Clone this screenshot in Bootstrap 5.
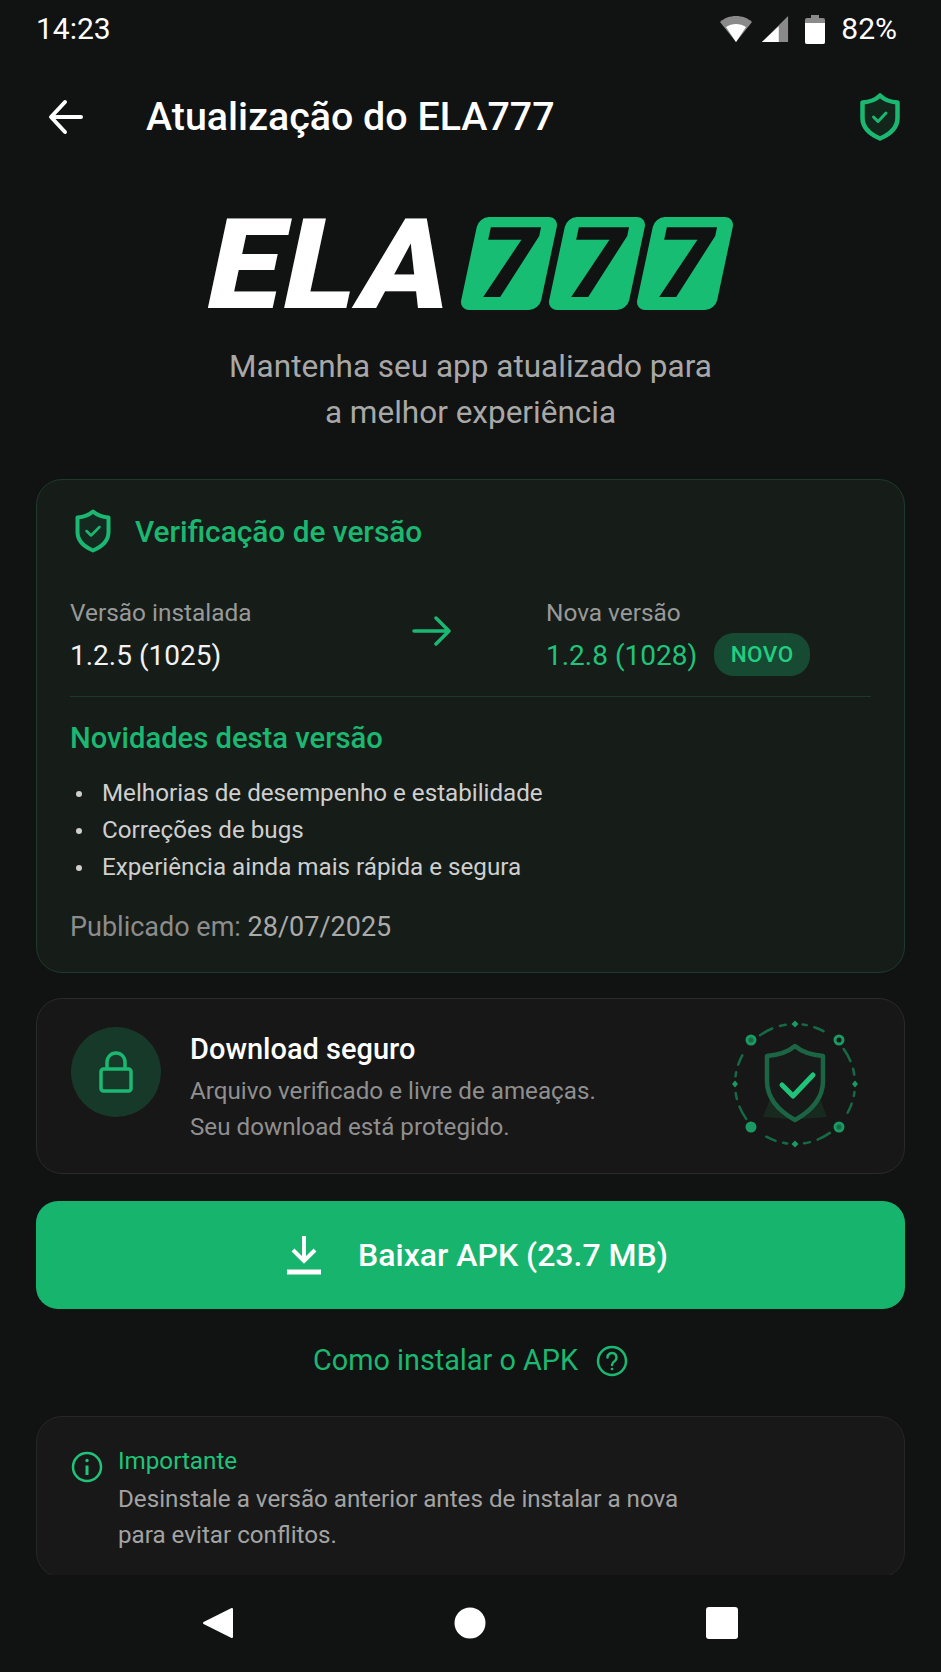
<!DOCTYPE html>
<html lang="pt-BR">
<head>
<meta charset="utf-8">
<title>Atualização do ELA777</title>
<link href="https://cdn.jsdelivr.net/npm/bootstrap@5.3.0/dist/css/bootstrap.min.css" rel="stylesheet">
<style>
html,body{margin:0;background:#111212;}
body{width:941px;height:1672px;overflow:hidden;font-family:Roboto,"Liberation Sans",sans-serif;color:#fff;}
.scr-main{height:1575px;overflow:hidden;padding:0 36px;}
.stat-bar{height:58px;margin:0 8px 0 0;font-size:30px;line-height:58px;}
.app-bar{height:58px;margin-top:30px;}
.app-title{font-size:39.400px;font-weight:500;margin-left:62px;line-height:58px;}
.back-ic{margin-left:12px;}
.logo-row{margin-top:69px;height:96px;padding-left:174px;}
.logo-ela{font-size:126px;font-weight:900;line-height:96px;margin-top:4px;transform:skewX(-12deg) scaleX(1.05);transform-origin:0 50%;letter-spacing:2px;width:259px;color:#fff;}
.logo-tile{width:80px;height:93px;background:#17bd72;border-radius:10px;transform:skewX(-12deg);color:#111212;font-size:98px;font-weight:900;line-height:93px;text-align:center;margin-right:8px;}
.sub-head{margin-top:33px;text-align:center;font-size:31.5px;line-height:46px;color:#a8a8a8;}
.ver-card{margin-top:43px;height:494px;background:#161d19;border:1.5px solid #1d3a2c;border-radius:26px;padding:28px 33px 0 33px;}
.ver-shield{margin-top:-3px;}
.ver-title{font-size:29.8px;font-weight:500;color:#1bb871;margin-left:23px;line-height:48px;}
.ver-grid{margin-top:38px;height:88px;}
.col-a{width:382px;margin-right:94px;}
.lbl-x{font-size:24.4px;color:#999;line-height:38px;}
.val-x{font-size:28px;line-height:48px;color:#f2f2f2;}
.val-g{color:#1fc47a;}
.arrow-svg{margin-top:22px;}
.nv-pill{background:#174a33;color:#21cf82;font-size:22.5px;font-weight:500;border-radius:20px;width:96px;height:43px;line-height:43px;text-align:center;margin:-4px 0 0 17px;letter-spacing:.5px;}
.ver-rule{border-top:1.5px solid #1c3a2b;margin-top:14px;}
.nov-title{font-size:29.2px;font-weight:500;color:#1bb871;line-height:36px;margin-top:23px;}
.nov-list{list-style:none;margin:19px 0 0;padding:0;}
.nov-list li{font-size:24.2px;line-height:37px;color:#cfcfcf;padding-left:32px;position:relative;}
.nov-list li::before{content:"";position:absolute;left:6px;top:16px;width:6px;height:6px;border-radius:50%;background:#cfcfcf;}
.pub-line{font-size:27px;line-height:36px;margin-top:23px;color:#8c8c8c;}
.pub-line span{color:#aaa;}
.dl-card{margin-top:25px;height:176px;background:#171717;border:1.5px solid #2a2a2a;border-radius:26px;padding:0 34px;}
.lock-circ{width:90px;height:90px;border-radius:50%;background:#17392a;margin-bottom:28px;}
.dl-text{margin:4px 0 0 29px;}
.dl-title{font-size:29px;font-weight:500;line-height:36px;}
.dl-sub{font-size:24.2px;line-height:36px;color:#8f8f8f;margin-top:6px;}
.dl-art{margin-left:auto;margin-right:10px;margin-top:-4px;}
.dl-btn{margin-top:27px;height:108px;width:100%;background:#17b46e;border:0;border-radius:22px;color:#fff;font-size:32px;font-weight:500;gap:36px;padding-left:25px;}
.dl-btn:hover{background:#17b46e;color:#fff;}
.how-link{margin-top:34px;height:36px;gap:18px;color:#1bb871;font-size:28.8px;text-decoration:none;}
.imp-card{margin-top:37px;height:162px;background:#181818;border:1.5px solid #262626;border-radius:26px;padding:24px 34px 0 34px;}
.imp-ic{margin-top:10px;}
.imp-body{margin-left:15px;}
.imp-title{font-size:24.2px;line-height:40px;color:#1fc47a;}
.imp-txt{font-size:24.2px;line-height:36px;color:#a3a3a3;}
.nav-strip{height:97px;padding-bottom:1px;padding-left:202px;gap:220px;}
.nav-cell{width:32px;height:32px;}
</style>
</head>
<body>
<div class="scr-main">
  <div class="stat-bar d-flex align-items-center justify-content-between">
    <span>14:23</span>
    <div class="d-flex align-items-center">
      <svg width="34" height="30" viewBox="0 0 34 30" class="me-2"><path d="M17 28 1 8C9 0 25 0 33 8Z" fill="#8a8a8a"/><path d="M17 28 7 13C13 9 21 9 27 13Z" fill="#fff"/></svg>
      <svg width="28" height="30" viewBox="0 0 30 30" class="me-3"><path d="M29 1V29H1Z" fill="#8a8a8a"/><path d="M19 12V29H1Z" fill="#fff"/></svg>
      <svg width="20" height="30" viewBox="0 0 20 30"><path d="M6 1h8v3h4a2 2 0 0 1 2 2v22a2 2 0 0 1-2 2H2a2 2 0 0 1-2-2V6a2 2 0 0 1 2-2h4z" fill="#8a8a8a"/><path d="M0 9H20V28a2 2 0 0 1-2 2H2a2 2 0 0 1-2-2Z" fill="#fff"/></svg>
      <span class="ms-3">82%</span>
    </div>
  </div>

  <div class="app-bar d-flex align-items-center">
    <svg class="back-ic" width="36" height="36" viewBox="0 0 36 36" fill="none" stroke="#fff" stroke-width="4" stroke-linecap="round" stroke-linejoin="round"><path d="M33 18H4M17 3 3 18l14 15"/></svg>
    <div class="app-title">Atualização do ELA777</div>
    <svg class="ms-auto me-1" width="42" height="48" viewBox="0 0 42 48" fill="none"><path d="M21 2.500c4 4 10 6.500 17.500 7V25c0 9-7 16-17.500 20.500C10.500 41 3.500 34 3.500 25V9.500C11 9 17 6.500 21 2.500Z" stroke="#1bb871" stroke-width="4.500" stroke-linejoin="round" fill="#12261c"/><path d="M14.500 24l4.500 4.500 8-8.500" stroke="#1bb871" stroke-width="3" stroke-linecap="round" stroke-linejoin="round"/></svg>
  </div>

  <div class="logo-row d-flex align-items-center">
    <div class="logo-ela">ELA</div>
    <div class="logo-tile">7</div>
    <div class="logo-tile">7</div>
    <div class="logo-tile">7</div>
  </div>

  <div class="sub-head">Mantenha seu app atualizado para<br>a melhor experiência</div>

  <div class="card ver-card">
    <div class="d-flex align-items-center">
      <svg class="ms-1 ver-shield" width="38" height="44" viewBox="0 0 38 44" fill="none"><path d="M19 2.500c4 3.500 9 5.500 15.500 6V23c0 8-6 14.500-15.500 18.500C9.500 37.500 3.500 31 3.500 23V8.500C10 8 15 6 19 2.500Z" stroke="#1bb871" stroke-width="4" stroke-linejoin="round" fill="#14291f"/><path d="M12.500 22l4.500 4.500 8.500-8.500" stroke="#1bb871" stroke-width="2.500" stroke-linecap="round" stroke-linejoin="round"/></svg>
      <div class="ver-title">Verificação de versão</div>
    </div>
    <div class="ver-grid d-flex align-items-start">
      <div class="col-a d-flex">
        <div class="flex-grow-1">
          <div class="lbl-x">Versão instalada</div>
          <div class="val-x">1.2.5 (1025)</div>
        </div>
        <svg class="arrow-svg" width="40" height="30" viewBox="0 0 40 30" fill="none" stroke="#1bb871" stroke-width="3.500" stroke-linecap="round" stroke-linejoin="round"><path d="M2 15H37M24 2l13 13-13 13"/></svg>
      </div>
      <div>
        <div class="lbl-x">Nova versão</div>
        <div class="d-flex align-items-center">
          <div class="val-x val-g">1.2.8 (1028)</div>
          <div class="nv-pill">NOVO</div>
        </div>
      </div>
    </div>
    <div class="ver-rule"></div>
    <div class="nov-title">Novidades desta versão</div>
    <ul class="nov-list">
      <li>Melhorias de desempenho e estabilidade</li>
      <li>Correções de bugs</li>
      <li>Experiência ainda mais rápida e segura</li>
    </ul>
    <div class="pub-line">Publicado em: <span>28/07/2025</span></div>
  </div>

  <div class="card dl-card flex-row align-items-center">
    <div class="lock-circ d-flex align-items-center justify-content-center">
      <svg width="34" height="42" viewBox="0 0 34 42" fill="none" stroke="#1bb871" stroke-width="3.500" stroke-linejoin="round"><rect x="2" y="18" width="30" height="22" rx="2.500"/><path d="M8 18V11a9 9 0 0 1 18 0v7"/></svg>
    </div>
    <div class="dl-text">
      <div class="dl-title">Download seguro</div>
      <div class="dl-sub">Arquivo verificado e livre de ameaças.<br>Seu download está protegido.</div>
    </div>
    <svg class="dl-art" width="130" height="130" viewBox="0 0 130 130" fill="none">
      <circle cx="65" cy="65" r="60" stroke="#156a45" stroke-width="2.500" stroke-dasharray="0 8 4 8 10 27 14 8 6 9" stroke-linecap="round"/>
      <path d="M65 1.500l3.500 3.500-3.500 3.500-3.500-3.500zM65 121.500l3.500 3.500-3.500 3.500-3.500-3.500zM5 61.500l3 3.500-3 3.500-3-3.500zM125 61.500l3 3.500-3 3.500-3-3.500z" fill="#1a9a62"/>
      <g stroke="#1a9a62" stroke-width="3"><circle cx="21" cy="21" r="4" fill="#156a45"/><circle cx="109" cy="21" r="4"/><circle cx="21" cy="108" r="4" fill="#1a9a62"/><circle cx="109" cy="108" r="4" fill="#156a45"/></g>
      <path d="M42 75 33 98 60 100ZM88 75 97 98 70 100Z" fill="#182a20"/>
      <path d="M65 27c7 6 16 9 28 10V62c0 17-12 30-28 39C49 92 37 79 37 62V37C49 36 58 33 65 27Z" fill="#171a18" stroke="#1c6544" stroke-width="4.500" stroke-linejoin="round"/>
      <path d="M52 66l11 11 20-21" stroke="#1fc47a" stroke-width="5" stroke-linecap="round" stroke-linejoin="round"/>
    </svg>
  </div>

  <button type="button" class="btn dl-btn d-flex align-items-center justify-content-center">
    <svg width="36" height="40" viewBox="0 0 36 40" fill="none" stroke="#fff" stroke-width="4"><path d="M18 1V25M7 15l11 11 11-11"/><path d="M1 37H35" stroke-width="5"/></svg>
    <span>Baixar APK (23.7 MB)</span>
  </button>

  <a href="#" class="how-link d-flex align-items-center justify-content-center">
    <span>Como instalar o APK</span>
    <svg width="32" height="32" viewBox="0 0 32 32" fill="none" stroke="#1bb871" stroke-width="2.500"><circle cx="16" cy="16" r="14"/><path d="M11.500 12.500a4.500 4.500 0 1 1 7 3.700c-1.500 1-2.500 2-2.500 3.800" stroke-linecap="round"/><circle cx="16" cy="24" r="1.300" fill="#1bb871" stroke="none"/></svg>
  </a>

  <div class="card imp-card flex-row align-items-start">
    <svg class="imp-ic" width="32" height="32" viewBox="0 0 32 32" fill="none" stroke="#1fc47a" stroke-width="2.500"><circle cx="16" cy="16" r="14"/><path d="M16 14.500V24" stroke-width="3"/><circle cx="16" cy="9.500" r="1.700" fill="#1fc47a" stroke="none"/></svg>
    <div class="imp-body">
      <div class="imp-title">Importante</div>
      <div class="imp-txt">Desinstale a versão anterior antes de instalar a nova<br>para evitar conflitos.</div>
    </div>
  </div>
</div>

<nav class="nav-strip d-flex align-items-center">
  <svg class="nav-cell" viewBox="0 0 32 32"><path d="M30 2V30L2 16Z" fill="#fff" stroke="#fff" stroke-width="2" stroke-linejoin="round"/></svg>
  <svg class="nav-cell" viewBox="0 0 32 32"><circle cx="16" cy="16" r="15.500" fill="#fff"/></svg>
  <svg class="nav-cell" viewBox="0 0 32 32"><rect x="0" y="0" width="32" height="32" rx="3" fill="#fff"/></svg>
</nav>
<script src="https://cdn.jsdelivr.net/npm/bootstrap@5.3.0/dist/js/bootstrap.bundle.min.js"></script>
</body>
</html>
